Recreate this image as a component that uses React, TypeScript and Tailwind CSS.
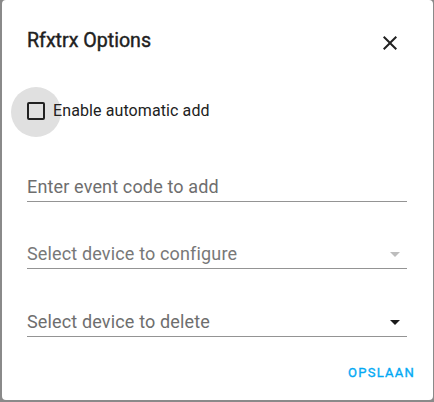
import React from "react";

export default function App() {
  return (
    <div
      className="w-[434px] h-[402px] bg-[#8a8a8a] flex items-start pl-[2px] pr-[1px] pb-[2px] overflow-hidden"
      style={{ fontFamily: "Roboto, 'Noto Sans', sans-serif" }}
    >
      <div className="w-[431px] h-[400px] bg-white rounded-[4px] flex flex-col px-[25px]">
        {/* Header */}
        <div className="flex items-start justify-between pt-[25px]">
          <h2 className="text-[19.6px] leading-[32px] font-normal text-[#212121] tracking-[0px] [-webkit-text-stroke:0.4px_#212121]">
            Rfxtrx Options
          </h2>
          <svg
            viewBox="0 0 24 24"
            className="w-[24px] h-[24px] mt-[6px] mr-[6px] text-[#212121]"
            fill="currentColor"
          >
            <path d="M19,6.41L17.59,5L12,10.59L6.41,5L5,6.41L10.59,12L5,17.59L6.41,19L12,13.41L17.59,19L19,17.59L13.41,12L19,6.41Z" />
          </svg>
        </div>

        {/* Checkbox row */}
        <div className="flex items-center h-[50px] mt-[29px]">
          <div className="relative w-[18px] h-[18px] -mt-[1px]">
            <div className="absolute left-[-16px] top-[-15px] w-[50px] h-[50px] rounded-full bg-[#e0e0e0]" />
            <div className="absolute inset-0 border-2 border-[#212121] rounded-[2px] bg-transparent" />
          </div>
          <span className="relative ml-[8px] text-[16px] leading-[20px] text-[#212121] tracking-[0.1px]">
            Enable automatic add
          </span>
        </div>

        {/* Field 1 */}
        <div className="mt-[39px] w-[380px] border-b border-[#949494] pb-[2px]">
          <div className="text-[18px] leading-[24px] text-[#6e6e6e] tracking-[0.15px]">
            Enter event code to add
          </div>
        </div>

        {/* Field 2 (disabled select) */}
        <div className="mt-[40px] w-[380px] border-b border-[#949494] pb-[2px] flex items-center justify-between">
          <div className="text-[18px] leading-[24px] text-[#787878] tracking-[0.15px]">
            Select device to configure
          </div>
          <svg viewBox="0 0 10 5" className="w-[10px] h-[5px] mr-[7px] mt-[1px]" fill="#bdbdbd">
            <path d="M0 0L5 5L10 0Z" />
          </svg>
        </div>

        {/* Field 3 */}
        <div className="mt-[41px] w-[380px] border-b border-[#949494] pb-[2px] flex items-center justify-between">
          <div className="text-[18px] leading-[24px] text-[#6e6e6e] tracking-[0.15px]">
            Select device to delete
          </div>
          <svg viewBox="0 0 10 5" className="w-[10px] h-[5px] mr-[7px] mt-[1px]" fill="#1a1a1a">
            <path d="M0 0L5 5L10 0Z" />
          </svg>
        </div>

        {/* Actions */}
        <div className="flex justify-end mt-[18px] mr-[-15px]">
          <button className="h-[36px] px-[8px] text-[13px] leading-[36px] font-normal tracking-[1.25px] text-[#03a9f4] uppercase [-webkit-text-stroke:0.35px_#03a9f4]">
            Opslaan
          </button>
        </div>
      </div>
    </div>
  );
}
